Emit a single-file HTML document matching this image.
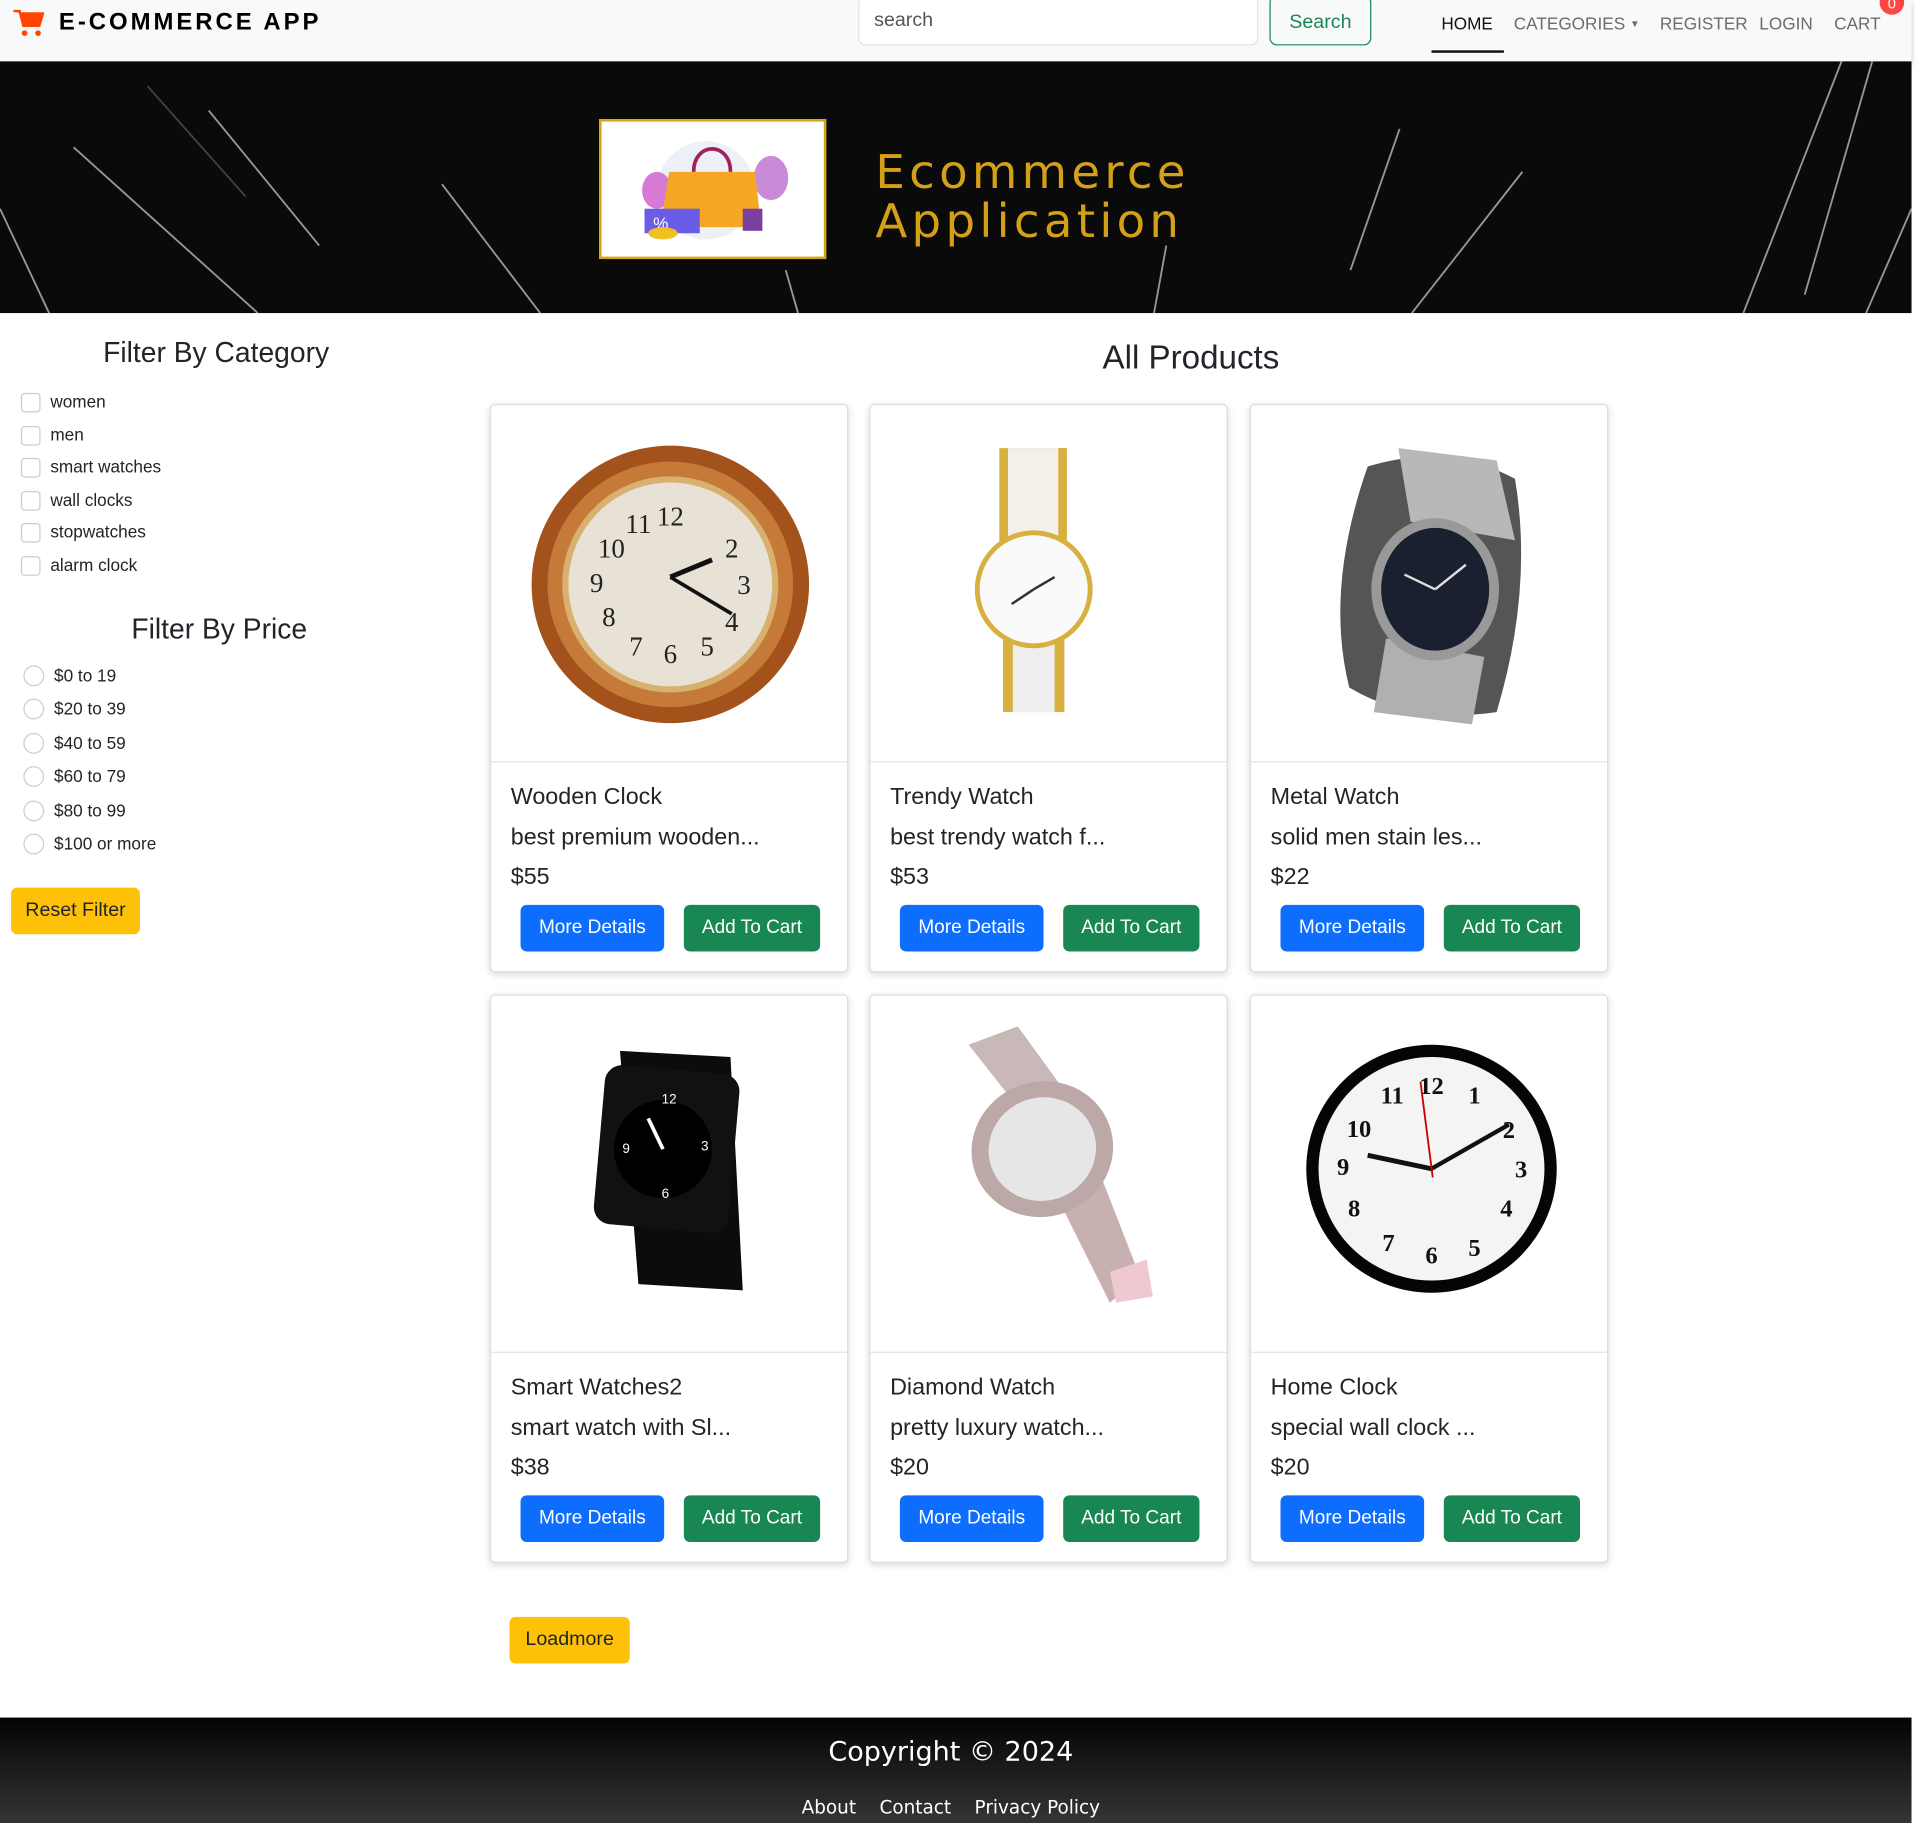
<!DOCTYPE html>
<html><head><meta charset="utf-8">
<style>
html,body{margin:0;padding:0;width:1925px;height:1823px;overflow:hidden;background:#fff}
#w{position:absolute;left:0;top:0;width:1568px;height:1485px;transform:scale(1.2277);transform-origin:0 0;font-family:"Liberation Sans",sans-serif;color:#212529}
.a{position:absolute;white-space:nowrap}
.nav{left:0;top:0;width:1557px;height:50px;background:#f8f9fa;box-shadow:0 2px 4px rgba(0,0,0,.25)}
.nl{top:11px;font-size:14px;color:#6c6c6c}
.card{position:absolute;width:290px;height:461px;border:1px solid #ddd;border-radius:4px;background:#fff;box-shadow:0 2px 6px rgba(0,0,0,.15)}
.card .img{position:absolute;left:0;top:0;width:290px;height:290px;border-bottom:1px solid #e3e3e3}
.card .t{position:absolute;left:16px;top:309px;font-size:19px}
.card .d{position:absolute;left:16px;top:342px;font-size:19px}
.card .p{position:absolute;left:16px;top:374px;font-size:19px}
.b1{position:absolute;left:24px;top:407px;width:117px;height:38px;background:#0d6efd;color:#fff;border-radius:5px;font-size:15.5px;line-height:38px;text-align:center}
.b2{position:absolute;left:157px;top:407px;width:111px;height:38px;background:#198754;color:#fff;border-radius:5px;font-size:15.5px;line-height:38px;text-align:center}
.cb{position:absolute;left:17px;width:14px;height:14px;border:1px solid #ccc;border-radius:3px;background:#fff}
.rd{position:absolute;left:19px;width:15px;height:15px;border:1px solid #ccc;border-radius:50%;background:#fff}
.lb{position:absolute;left:41px;font-size:14px}
.lp{position:absolute;left:44px;font-size:14px}
</style></head><body><div id="w">
<div class="a nav"></div>
<svg class="a" style="left:10px;top:7px" width="26" height="24" viewBox="0 0 26 24"><path d="M1 2h5l3 12h13l3-10H7" fill="#ff4500" stroke="#ff4500" stroke-width="2"/><circle cx="10" cy="20" r="2.3" fill="#ff4500"/><circle cx="21" cy="20" r="2.3" fill="#ff4500"/></svg>
<div class="a" style="left:48px;top:7px;font-size:19.5px;font-weight:bold;letter-spacing:2.4px;color:#000">E-COMMERCE APP</div>
<div class="a" style="left:699px;top:-4px;width:324px;height:39px;background:#fff;border:1px solid #dee2e6;border-radius:6px"></div>
<div class="a" style="left:712px;top:8px;font-size:16px;color:#555">search</div>
<div class="a" style="left:1034px;top:-4px;width:81px;height:39px;border:1px solid #198754;border-radius:6px;color:#198754;font-size:16px;text-align:center;line-height:43px">Search</div>
<div class="a nl" style="left:1174px;color:#111">HOME</div>
<div class="a" style="left:1166px;top:41px;width:59px;height:2px;background:#111"></div>
<div class="a nl" style="left:1233px">CATEGORIES <span style="font-size:8px;vertical-align:2px">▼</span></div>
<div class="a nl" style="left:1352px">REGISTER</div>
<div class="a nl" style="left:1433px">LOGIN</div>
<div class="a nl" style="left:1494px">CART</div>
<div class="a" style="left:1531px;top:-8px;width:20px;height:20px;border-radius:50%;background:#f44;color:#fff;font-size:12px;text-align:center;line-height:22px">0</div>

<div class="a" style="left:0;top:50px;width:1557px;height:205px;background:#0a0a0a;overflow:hidden">
<svg width="1557" height="205"><g stroke="#bbb" stroke-width="1.5" opacity=".8">
<line x1="60" y1="70" x2="210" y2="205"/><line x1="170" y1="40" x2="260" y2="150"/><line x1="360" y1="100" x2="440" y2="205"/><line x1="0" y1="120" x2="40" y2="205"/><line x1="640" y1="170" x2="650" y2="205"/><line x1="1140" y1="55" x2="1100" y2="170"/><line x1="1240" y1="90" x2="1150" y2="205"/><line x1="1500" y1="0" x2="1420" y2="205"/><line x1="1525" y1="0" x2="1470" y2="190"/><line x1="1557" y1="120" x2="1520" y2="205"/><line x1="950" y1="150" x2="940" y2="205"/><line x1="120" y1="20" x2="200" y2="110" opacity=".4"/></g></svg>
</div>
<div class="a" style="left:488px;top:97px;width:181px;height:110px;background:#fff;border:2px solid #d4a614"></div>
<svg class="a" style="left:510px;top:110px" width="145" height="90" viewBox="0 0 145 90"><circle cx="65" cy="45" r="40" fill="#eef0f8"/><ellipse cx="25" cy="45" rx="12" ry="15" fill="#d77ad6"/><ellipse cx="118" cy="35" rx="14" ry="18" fill="#c98ad9"/><path d="M35 30h70l5 45H28z" fill="#f5a623"/><path d="M55 30c0-25 30-25 30 0" stroke="#a02060" stroke-width="3" fill="none"/><rect x="15" y="60" width="45" height="20" fill="#6b5ce7"/><text x="22" y="77" font-size="14" fill="#fff" font-family="Liberation Sans">%</text><rect x="95" y="60" width="16" height="18" fill="#7b3fa0"/><ellipse cx="30" cy="80" rx="12" ry="5" fill="#f0c020"/></svg>
<div class="a" style="left:713px;top:120px;font-size:38px;line-height:40px;color:#d4a017;font-family:'DejaVu Sans',sans-serif;letter-spacing:3.5px">Ecommerce<br>Application</div>

<div class="a" style="left:84px;top:274px;font-size:23px">Filter By Category</div>
<div class="cb" style="top:320px"></div><div class="lb" style="top:319px">women</div>
<div class="cb" style="top:347px"></div><div class="lb" style="top:346px">men</div>
<div class="cb" style="top:373px"></div><div class="lb" style="top:372px">smart watches</div>
<div class="cb" style="top:400px"></div><div class="lb" style="top:399px">wall clocks</div>
<div class="cb" style="top:426px"></div><div class="lb" style="top:425px">stopwatches</div>
<div class="cb" style="top:453px"></div><div class="lb" style="top:452px">alarm clock</div>
<div class="a" style="left:107px;top:499px;font-size:23px">Filter By Price</div>
<div class="rd" style="top:542px"></div><div class="lp" style="top:542px">$0 to 19</div>
<div class="rd" style="top:569px"></div><div class="lp" style="top:569px">$20 to 39</div>
<div class="rd" style="top:597px"></div><div class="lp" style="top:597px">$40 to 59</div>
<div class="rd" style="top:624px"></div><div class="lp" style="top:624px">$60 to 79</div>
<div class="rd" style="top:652px"></div><div class="lp" style="top:652px">$80 to 99</div>
<div class="rd" style="top:679px"></div><div class="lp" style="top:679px">$100 or more</div>
<div class="a" style="left:9px;top:723px;width:105px;height:38px;background:#ffc107;border-radius:5px;font-size:16px;line-height:38px;text-align:center">Reset Filter</div>

<div class="a" style="left:898px;top:276px;font-size:27px">All Products</div>

<div class="card" style="left:399px;top:329px"><div class="img"><svg width="290" height="290" viewBox="0 0 290 290"><circle cx="146" cy="146" r="113" fill="#a4521c"/><circle cx="146" cy="146" r="100" fill="#c67a3a"/><circle cx="146" cy="146" r="88" fill="#d8b070"/><circle cx="146" cy="146" r="83" fill="#e8e2d6"/><g font-family="Liberation Serif" font-size="22" fill="#222" text-anchor="middle"><text x="146" y="98">12</text><text x="196" y="124">2</text><text x="206" y="154">3</text><text x="196" y="184">4</text><text x="176" y="204">5</text><text x="146" y="210">6</text><text x="118" y="204">7</text><text x="96" y="180">8</text><text x="86" y="152">9</text><text x="98" y="124">10</text><text x="120" y="104">11</text></g><line x1="146" y1="140" x2="180" y2="126" stroke="#111" stroke-width="4"/><line x1="146" y1="140" x2="196" y2="170" stroke="#111" stroke-width="3"/></svg></div><div class="t">Wooden Clock</div><div class="d">best premium wooden...</div><div class="p">$55</div><div class="b1">More Details</div><div class="b2">Add To Cart</div></div>
<div class="card" style="left:708px;top:329px"><div class="img"><svg width="290" height="290" viewBox="0 0 290 290"><rect x="105" y="35" width="55" height="95" fill="#d8b040"/><rect x="112" y="35" width="41" height="95" fill="#f4f0e8"/><rect x="108" y="180" width="50" height="70" fill="#d8b040"/><rect x="116" y="180" width="34" height="70" fill="#eee"/><circle cx="133" cy="150" r="48" fill="#d8b040"/><circle cx="133" cy="150" r="44" fill="#fafafa"/><line x1="133" y1="150" x2="115" y2="162" stroke="#333" stroke-width="2"/><line x1="133" y1="150" x2="150" y2="140" stroke="#333" stroke-width="2"/></svg></div><div class="t">Trendy Watch</div><div class="d">best trendy watch f...</div><div class="p">$53</div><div class="b1">More Details</div><div class="b2">Add To Cart</div></div>
<div class="card" style="left:1018px;top:329px"><div class="img"><svg width="290" height="290" viewBox="0 0 290 290"><path d="M95 50 Q60 150 80 230 Q130 260 200 250 Q230 150 215 60 Q160 30 95 50z" fill="#555"/><path d="M120 35 L200 45 L215 110 L130 95z" fill="#b8b8b8"/><path d="M110 190 L190 205 L180 260 L100 250z" fill="#b0b0b0"/><ellipse cx="150" cy="150" rx="52" ry="58" fill="#999"/><ellipse cx="150" cy="150" rx="44" ry="50" fill="#1a2030"/><line x1="150" y1="150" x2="125" y2="138" stroke="#ddd" stroke-width="2"/><line x1="150" y1="150" x2="175" y2="130" stroke="#ddd" stroke-width="2"/></svg></div><div class="t">Metal Watch</div><div class="d">solid men stain les...</div><div class="p">$22</div><div class="b1">More Details</div><div class="b2">Add To Cart</div></div>
<div class="card" style="left:399px;top:810px"><div class="img"><svg width="290" height="290" viewBox="0 0 290 290"><path d="M105 45 L195 50 L205 240 L120 235z" fill="#0c0c0c"/><rect x="88" y="60" width="110" height="130" rx="14" fill="#111" transform="rotate(5 143 125)"/><circle cx="140" cy="125" r="40" fill="#000"/><g fill="#fff" font-size="11" font-family="Liberation Sans" text-anchor="middle"><text x="145" y="88">12</text><text x="174" y="126">3</text><text x="142" y="165">6</text><text x="110" y="128">9</text></g><line x1="140" y1="125" x2="128" y2="100" stroke="#fff" stroke-width="3"/></svg></div><div class="t">Smart Watches2</div><div class="d">smart watch with Sl...</div><div class="p">$38</div><div class="b1">More Details</div><div class="b2">Add To Cart</div></div>
<div class="card" style="left:708px;top:810px"><div class="img"><svg width="290" height="290" viewBox="0 0 290 290"><path d="M80 40 L120 25 L160 80 L135 110z" fill="#c9b8b8"/><path d="M150 160 L185 140 L220 230 L195 250z" fill="#c8b0b0"/><ellipse cx="140" cy="125" rx="58" ry="55" fill="#bda8a8" transform="rotate(-20 140 125)"/><ellipse cx="140" cy="125" rx="44" ry="42" fill="#e6e6e6" transform="rotate(-20 140 125)"/><path d="M195 225 L225 215 L230 245 L200 250z" fill="#f0c8d0"/></svg></div><div class="t">Diamond Watch</div><div class="d">pretty luxury watch...</div><div class="p">$20</div><div class="b1">More Details</div><div class="b2">Add To Cart</div></div>
<div class="card" style="left:1018px;top:810px"><div class="img"><svg width="290" height="290" viewBox="0 0 290 290"><ellipse cx="147" cy="141" rx="102" ry="101" fill="#050505"/><ellipse cx="147" cy="141" rx="92" ry="91" fill="#f4f4f4"/><g font-family="Liberation Serif" font-size="20" fill="#111" text-anchor="middle" font-weight="bold"><text x="147" y="80">12</text><text x="182" y="88">1</text><text x="210" y="116">2</text><text x="220" y="148">3</text><text x="208" y="180">4</text><text x="182" y="212">5</text><text x="147" y="218">6</text><text x="112" y="208">7</text><text x="84" y="180">8</text><text x="75" y="146">9</text><text x="88" y="115">10</text><text x="115" y="88">11</text></g><line x1="147" y1="141" x2="95" y2="130" stroke="#111" stroke-width="4"/><line x1="147" y1="141" x2="210" y2="105" stroke="#111" stroke-width="3.5"/><line x1="148" y1="148" x2="138" y2="70" stroke="#c00" stroke-width="1.5"/></svg></div><div class="t">Home Clock</div><div class="d">special wall clock ...</div><div class="p">$20</div><div class="b1">More Details</div><div class="b2">Add To Cart</div></div>

<div class="a" style="left:415px;top:1317px;width:98px;height:38px;background:#ffc107;border-radius:5px;font-size:16px;line-height:38px;text-align:center">Loadmore</div>

<div class="a" style="left:0;top:1399px;width:1557px;height:86px;background:linear-gradient(#030303,#353535)"></div>
<div class="a" style="left:0;top:1415px;width:1549px;text-align:center;font-size:22px;color:#fff;font-family:'DejaVu Sans',sans-serif">Copyright © 2024</div>
<div class="a" style="left:0;top:1463px;width:1549px;text-align:center;font-size:15px;color:#fff;font-family:'DejaVu Sans',sans-serif">About&nbsp;&nbsp;&nbsp; Contact&nbsp;&nbsp;&nbsp; Privacy Policy</div>
</div></body></html>
